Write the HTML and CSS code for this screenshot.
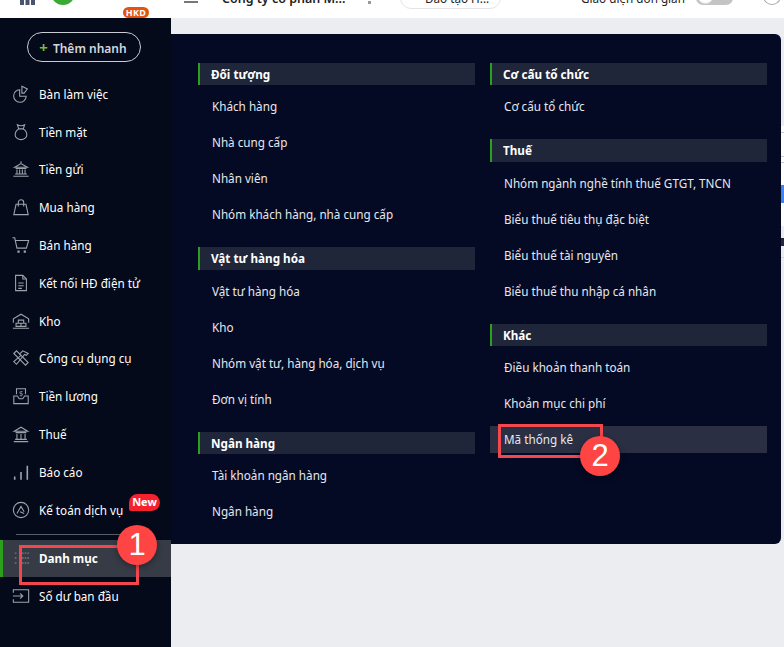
FILE: index.html
```html
<!DOCTYPE html>
<html lang="vi">

<head>
  <meta charset="UTF-8" />
  <meta name="viewport" content="width=device-width, initial-scale=1.0" />
  <title>Danh mục</title>

  <link rel="stylesheet" href="styles.css">

</head>

<body>

  <div class="page">

    <!-- Thanh trên, bị cắt ở mép ảnh -->
    <header class="topbar">
      <div class="topbar-row">
        <svg class="apps" width="15" height="14" viewBox="0 0 15 14"><path d="M0 0h4v14H0zM5.5 0h4v14h-4zM11 0h4v14h-4z" fill="#4a5470"/></svg>
        <div class="logo"></div>
        <span class="hkd">HKD</span>
        <div class="burger"></div>
        <span class="company">Công ty cổ phần M...</span>
        <span class="caret"></span>
        <div class="pill">Đào tạo H...</div>
        <span class="simple">Giao diện đơn giản</span>
        <div class="toggle"><span class="knob"></span></div>
        <div class="help"></div>
      </div>
    </header>

    <div class="workspace">

      <!-- Menu trái -->
      <aside class="sidebar">
        <button class="quick-add"><span class="plus">+</span>Thêm nhanh</button>

        <nav class="side-nav">
          <a class="side-item">
            <svg class="side-icon" viewBox="0 0 20 20"><path d="M8.500 5.200a7 7 0 1 0 7.300 7.300H8.500z"/><path d="M11 1.500l6 3-3.500 4.500H11z"/></svg>
            Bàn làm việc
          </a>
          <a class="side-item">
            <svg class="side-icon" viewBox="0 0 20 20"><path d="M6 2c2 1 6 1 8 0l-1.500 4.500h-5z"/><path d="M7.500 6.500C4.500 8.500 3.500 11 3.500 13c0 3 3 5.500 6.500 5.500s6.500-2.500 6.500-5.500c0-2-1-4.500-4-6.500"/></svg>
            Tiền mặt
          </a>
          <a class="side-item">
            <svg class="side-icon" viewBox="0 0 20 20"><path d="M10 1.500v2.500M3 8l7-4 7 4zM4 9.500h12M5.500 10.500v4.500M8.500 10.500v4.500M11.500 10.500v4.500M14.500 10.500v4.500M3.500 15.500h13M1.500 18h17"/></svg>
            Tiền gửi
          </a>
          <a class="side-item">
            <svg class="side-icon" viewBox="0 0 20 20"><path d="M4.500 7h11l2.500 11.500H2z"/><path d="M7 9.500V5a3 3 0 0 1 6 0v4.500"/></svg>
            Mua hàng
          </a>
          <a class="side-item">
            <svg class="side-icon" viewBox="0 0 20 20"><path d="M0.500 2h2.500l2.500 11.500h10.500l2.500-8.500H4"/><path class="solid" d="M6 16h2.500v2.500H6zM13 16h2.500v2.500H13z"/></svg>
            Bán hàng
          </a>
          <a class="side-item">
            <svg class="side-icon" viewBox="0 0 20 20"><path d="M4 1.500h8l4 4v13H4z"/><path d="M12 1.500v4h4M7 10h6M7 13h6M7 16h4"/></svg>
            Kết nối HĐ điện tử
          </a>
          <a class="side-item">
            <svg class="side-icon" viewBox="0 0 20 20"><path d="M1.500 12V7.500L10 2.500l8.500 5V12"/><path d="M7 9h6v3.500H7zM4.500 12.500h5.500V16H4.500zM10 12.500h5.500V16H10zM1 18h18"/></svg>
            Kho
          </a>
          <a class="side-item">
            <svg class="side-icon" viewBox="0 0 20 20"><path d="M2 5l3-3 13 13-3 3z"/><path d="M8 6l4-4 6 3-2 2-2-1-9 11-3-3 8-7"/></svg>
            Công cụ dụng cụ
          </a>
          <a class="side-item">
            <svg class="side-icon" viewBox="0 0 20 20"><path d="M5 8V2h10v6"/><path d="M2 10v8.500h16V10h-4l-2 3H8l-2-3z"/><text class="dollar" x="10" y="10">$</text></svg>
            Tiền lương
          </a>
          <a class="side-item">
            <svg class="side-icon" viewBox="0 0 20 20"><path d="M2.500 7L10 2.500 17.500 7zM4 8.500h12M5.500 10v5.500M10 10v5.500M14.500 10v5.500M3.500 16h13M2 18.500h16"/></svg>
            Thuế
          </a>
          <a class="side-item">
            <svg class="side-icon" viewBox="0 0 20 20"><path class="bars" d="M3 15v3.500M10 10v8.500M17 3v15.500"/></svg>
            Báo cáo
          </a>
          <a class="side-item">
            <svg class="side-icon" viewBox="0 0 20 20"><circle cx="10" cy="10" r="8.500"/><path d="M5.500 14L10 6l3.500 6M9 12l4.500 2"/></svg>
            Kế toán dịch vụ
            <span class="new-badge">New</span>
          </a>
          <div class="side-sep"></div>
          <a class="side-item active">
            <svg class="side-icon" viewBox="0 0 20 20"><path class="dots" d="M3 4.500h2M3 10h2M3 15.500h2"/><path class="dots" d="M8 4.500h11M8 10h11M8 15.500h11"/></svg>
            Danh mục
          </a>
          <a class="side-item">
            <svg class="side-icon" viewBox="0 0 20 20"><path d="M1.500 6.500V3h17v14h-17v-3.500"/><path d="M1 10h11M9 7l3 3-3 3"/></svg>
            Số dư ban đầu
          </a>
        </nav>
      </aside>

      <main class="content">
        <section class="panel">

          <div class="panel-col">
            <div class="group">
              <h3 class="group-title">Đối tượng</h3>
              <a class="group-item">Khách hàng</a>
              <a class="group-item">Nhà cung cấp</a>
              <a class="group-item">Nhân viên</a>
              <a class="group-item">Nhóm khách hàng, nhà cung cấp</a>
            </div>
            <div class="group">
              <h3 class="group-title">Vật tư hàng hóa</h3>
              <a class="group-item">Vật tư hàng hóa</a>
              <a class="group-item">Kho</a>
              <a class="group-item">Nhóm vật tư, hàng hóa, dịch vụ</a>
              <a class="group-item">Đơn vị tính</a>
            </div>
            <div class="group">
              <h3 class="group-title">Ngân hàng</h3>
              <a class="group-item">Tài khoản ngân hàng</a>
              <a class="group-item">Ngân hàng</a>
            </div>
          </div>

          <div class="panel-col">
            <div class="group">
              <h3 class="group-title">Cơ cấu tổ chức</h3>
              <a class="group-item">Cơ cấu tổ chức</a>
            </div>
            <div class="group">
              <h3 class="group-title">Thuế</h3>
              <a class="group-item">Nhóm ngành nghề tính thuế GTGT, TNCN</a>
              <a class="group-item">Biểu thuế tiêu thụ đặc biệt</a>
              <a class="group-item">Biểu thuế tài nguyên</a>
              <a class="group-item">Biểu thuế thu nhập cá nhân</a>
            </div>
            <div class="group">
              <h3 class="group-title">Khác</h3>
              <a class="group-item">Điều khoản thanh toán</a>
              <a class="group-item">Khoản mục chi phí</a>
              <a class="group-item hover">Mã thống kê</a>
            </div>
          </div>

        </section>

        <!-- Phần trang phía sau còn lộ ra ở mép phải -->
        <div class="peek">
          <div class="peek-white">
            <div class="peek-line first"></div>
            <div class="peek-line second"></div>
            <div class="peek-line third"></div>
            <div class="peek-blue"></div>
          </div>
          <div class="peek-dark"></div>
          <div class="peek-line last"></div>
        </div>
      </main>

    </div>

    <!-- Chú thích hướng dẫn -->
    <div class="mark mark-one"></div>
    <div class="step step-one">1</div>
    <div class="mark mark-two"></div>
    <div class="step step-two">2</div>

  </div>

</body>

</html>
```

FILE: styles.css
```css
* {
  box-sizing: border-box;
}

body {
  margin: 0;
  font-family: "Noto Sans", sans-serif;
  font-size: 11.7px;
  color: #fff;
}

.page {
  position: relative;
  width: 784px;
  height: 647px;
  overflow: hidden;
  background: #ecedf1;
}

/* thanh trên */
.topbar {
  height: 18px;
  background: #fff;
  overflow: hidden;
}

.topbar-row {
  display: flex;
  align-items: center;
  height: 40px;
  margin-top: -22px;
  color: #222;
}

.apps {
  margin-left: 20px;
}

.logo {
  width: 24px;
  height: 14px;
  margin-left: 16px;
  border-radius: 0 0 12px 12px;
  background: #3aaa35;
}

.hkd {
  width: 26px;
  height: 11px;
  margin: 29px 0 0 48px;
  border-radius: 6px;
  background: #e2540f;
  color: #fff;
  font-size: 9px;
  font-weight: 700;
  line-height: 11px;
  text-align: center;
  letter-spacing: 0.4px;
}

.burger {
  width: 14px;
  height: 2px;
  margin: 8px 0 0 35px;
  background: #777;
}

.company {
  width: 146px;
  margin-left: 24px;
  font-size: 12.500px;
  font-weight: 600;
  white-space: nowrap;
}

.caret {
  width: 3px;
  height: 3px;
  margin-top: 8px;
  background: #999;
}

.pill {
  width: 101px;
  height: 22px;
  margin-left: 29px;
  border: 1px solid #e4e4e6;
  border-radius: 11px;
  line-height: 20px;
  padding-left: 24px;
  white-space: nowrap;
}

.simple {
  width: 115px;
  margin-left: 80px;
  white-space: nowrap;
}

.toggle {
  position: relative;
  width: 37px;
  height: 14px;
  border-radius: 7px;
  background: #c4c4c4;
}

.knob {
  position: absolute;
  left: 1px;
  top: -4px;
  width: 17px;
  height: 17px;
  border-radius: 50%;
  background: #fff;
  border: 1px solid #ddd;
}

.help {
  width: 18px;
  height: 14px;
  margin-left: 30px;
  border: 1px solid #aaa;
  border-top: 0;
  border-radius: 0 0 9px 9px;
}

.workspace {
  display: flex;
  height: 629px;
}

/* menu trái */
.sidebar {
  flex: 0 0 171px;
  padding-top: 14px;
  background: #050a1b;
}

.quick-add {
  display: block;
  width: 114px;
  height: 30px;
  margin: 0 0 13px 27px;
  padding: 0 2px 0 0;
  border: 1px solid #c9ccd2;
  border-radius: 15px;
  background: transparent;
  color: #d3d6dc;
  font-family: inherit;
  font-size: 12px;
  font-weight: 600;
}

.plus {
  margin-right: 5px;
  color: #6fbe3c;
  font-size: 15px;
  font-weight: 700;
}

.side-nav {
  display: flex;
  flex-direction: column;
}

.side-item {
  position: relative;
  display: flex;
  align-items: center;
  height: 37.8px;
  padding-left: 12px;
  gap: 9px;
  white-space: nowrap;
}

.side-icon {
  flex: none;
  width: 18px;
  height: 18px;
  fill: none;
  stroke: #9ea2aa;
  stroke-width: 1.2;
}

.side-icon .solid {
  fill: #9ea2aa;
  stroke: none;
}

.side-icon .bars {
  stroke-width: 1.8;
}

.side-icon .dots {
  stroke: #70757f;
  stroke-width: 1.5;
  stroke-dasharray: 2 1;
}

.dollar {
  fill: #9ea2aa;
  stroke: none;
  font-size: 8px;
  text-anchor: middle;
}

.new-badge {
  position: absolute;
  left: 129px;
  top: 3px;
  width: 31px;
  height: 17px;
  border-radius: 9px 9px 9px 2px;
  background: #f5222d;
  font-size: 11px;
  font-weight: 700;
  line-height: 16px;
  text-align: center;
}

.side-sep {
  height: 1px;
  margin: 5px 41px 5.4px 16px;
  background: #5a5e68;
}

.side-item.active {
  height: 37px;
  border-left: 3px solid #2ba01e;
  padding-left: 9px;
  background: #363b46;
  font-weight: 700;
}

/* khối danh mục */
.content {
  flex: 1;
  display: flex;
  align-items: flex-start;
  padding-top: 16px;
}

.panel {
  flex: 0 0 610px;
  display: grid;
  grid-template-columns: 277px 277px;
  column-gap: 15px;
  height: 510px;
  padding: 29px 0 0 27px;
  background: #050a24;
  border-radius: 0 6px 6px 0;
}

.group {
  display: flex;
  flex-direction: column;
  margin-bottom: 15px;
}

.group-title {
  height: 22.3px;
  margin: 0 0 3px;
  padding-left: 11px;
  border-left: 2px solid #2ba01e;
  background: #20263a;
  font-size: 11.7px;
  font-weight: 700;
  line-height: 23px;
}

.group-item {
  height: 36px;
  padding-left: 14px;
  color: #e6e8ee;
  line-height: 36px;
  white-space: nowrap;
}

.group-item.hover {
  height: 27px;
  margin: 5px 0 4px;
  background: #2a2f44;
  line-height: 27px;
}

/* mép phải */
.peek {
  flex: 1;
  padding-top: 92px;
}

.peek-white {
  height: 100px;
  padding-top: 6px;
  background: #fff;
}

.peek-line {
  height: 1px;
  background: #c9cbd0;
}

.peek-line.second {
  margin-top: 23px;
}

.peek-line.third {
  margin-top: 5px;
}

.peek-line.last {
  margin-top: 11px;
  background: #d5d6da;
}

.peek-blue {
  height: 18px;
  margin-top: 22px;
  background: #3f86f5;
}

.peek-dark {
  height: 8px;
  margin-top: 12px;
  background: #23283a;
}

/* chú thích đỏ */
.mark {
  position: absolute;
  border: 3px solid #f2474c;
}

.mark-one {
  left: 19px;
  top: 545px;
  width: 120px;
  height: 40px;
}

.mark-two {
  left: 498px;
  top: 424px;
  width: 105px;
  height: 34px;
}

.step {
  position: absolute;
  width: 40px;
  height: 40px;
  border-radius: 50%;
  background: #ff4444;
  box-shadow: 0 2px 6px rgba(0, 0, 0, 0.35);
  font-family: "Liberation Sans", sans-serif;
  font-size: 31px;
  line-height: 40px;
  text-align: center;
}

.step-one {
  left: 117px;
  top: 525px;
}

.step-two {
  left: 580px;
  top: 436px;
}
```
